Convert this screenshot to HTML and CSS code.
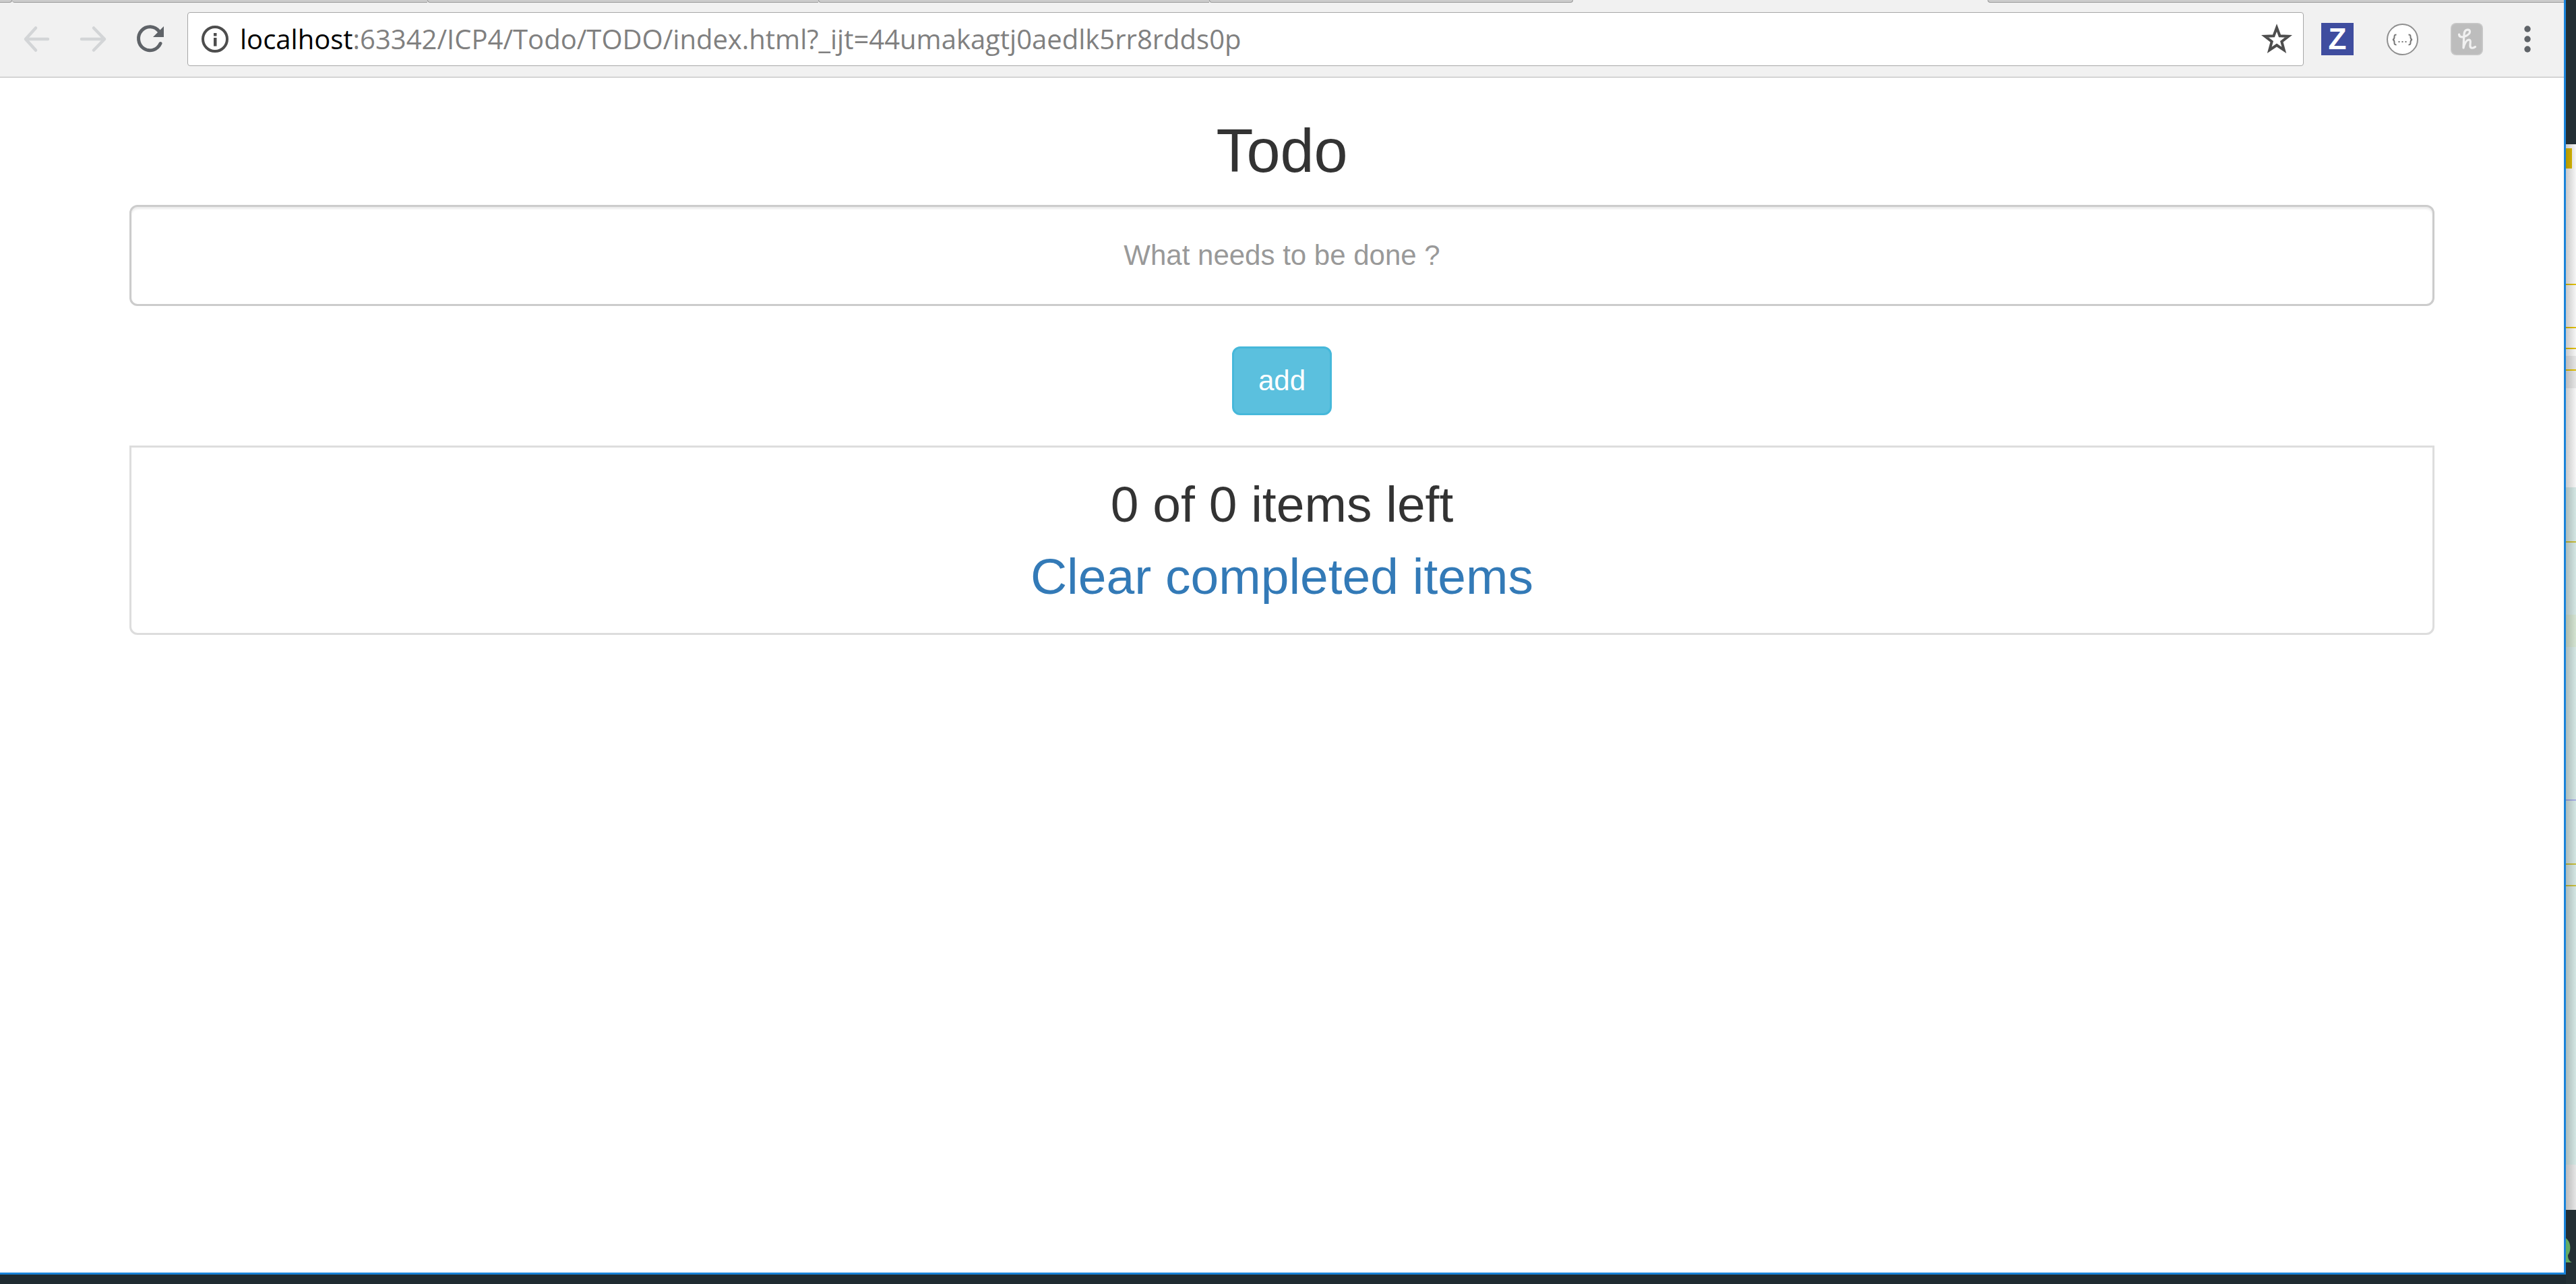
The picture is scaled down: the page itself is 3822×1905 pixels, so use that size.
FILE: index.html
```html
<!DOCTYPE html>
<html lang="en">
<head>
<meta charset="utf-8">
<title>Todo</title>
<link rel="stylesheet" href="styles.css">
</head>
<body>
<div class="desktop">
  <div class="window">
    <div class="tabs">
      <span class="tab tab-first"></span>
      <span class="tab tab-wide"></span>
      <span class="tab"></span>
      <span class="tab"></span>
      <span class="tab tab-last"></span>
      <span class="tab-active"></span>
      <span class="tab-rest"></span>
    </div>
    <header class="toolbar">
      <nav class="nav">
        <button class="icon-button" aria-label="Back" disabled>
          <svg class="icon" viewBox="0 0 40 40"><path d="M19 3.500 4 20 19 36.500M4 20H37" fill="none" stroke="#d3d5d7" stroke-width="4.500" stroke-linecap="round" stroke-linejoin="round"/></svg>
        </button>
        <button class="icon-button" aria-label="Forward" disabled>
          <svg class="icon" viewBox="0 0 40 40"><path d="M21 3.500 37 20 21 36.500M37 20H3" fill="none" stroke="#d3d5d7" stroke-width="4.500" stroke-linecap="round" stroke-linejoin="round"/></svg>
        </button>
        <button class="icon-button" aria-label="Reload">
          <svg class="icon" viewBox="0 0 40 40"><path d="M34 8.500A17 17.500 0 1 0 36 26.500" fill="none" stroke="#5f6368" stroke-width="5" stroke-linecap="round"/><path d="M41 1V17H25Z" fill="#5f6368"/></svg>
        </button>
      </nav>
      <div class="omnibox">
        <svg class="icon" viewBox="0 0 40 40" aria-hidden="true"><circle cx="20" cy="20" r="18" fill="none" stroke="#4d4d4d" stroke-width="4"/><path d="M18 11h4.500v4.500H18zM18 18h4.500v12.500H18z" fill="#4d4d4d"/></svg>
        <div class="url" role="textbox" aria-label="Address" contenteditable="true" spellcheck="false"><span class="host">localhost</span>:63342/ICP4/Todo/TODO/index.html?_ijt=44umakagtj0aedlk5rr8rdds0p</div>
        <button class="icon-button" aria-label="Bookmark this page">
          <svg class="star" viewBox="0 0 44 44"><path d="M22 5 26.500 17.200 39.500 17.700 29.300 25.700 32.800 38.300 22 31 11.200 38.300 14.700 25.700 4.500 17.700 17.500 17.200Z" fill="none" stroke="#4d4d4d" stroke-width="4"/></svg>
        </button>
      </div>
      <div class="extensions">
        <button class="ext ext-z">Z</button>
        <button class="ext" aria-label="JSON viewer">
          <svg class="ext-icon" viewBox="0 0 48 48"><circle cx="24.500" cy="24.500" r="22.500" fill="#fff" stroke="#8f8f8f" stroke-width="2"/><path d="M15.500 17.500c-3 0-3 1-3 3.500 0 2.500-.5 3.500-2.500 3.800 2 .3 2.500 1.500 2.500 4 0 2.500 0 3.700 3 3.700M33.500 17.500c3 0 3 1 3 3.500 0 2.500.5 3.500 2.500 3.800-2 .3-2.500 1.500-2.500 4 0 2.500 0 3.700-3 3.700" fill="none" stroke="#777" stroke-width="2"/><path d="M18.500 28h2M23.500 28h2M28.500 28h2" stroke="#777" stroke-width="2"/></svg>
        </button>
        <button class="ext" aria-label="Honey">
          <svg class="ext-icon" viewBox="0 0 48 48"><rect width="48" height="48" rx="8" fill="#c8c8c8"/><rect x="1.500" y="1.500" width="45" height="45" rx="7" fill="#bdbdbd"/><path d="M12.500 17C13 21.500 17 21.500 21 20 26 18 29 16 28.500 12.500 28 9 22 9 20.500 14 19.500 18 19.500 26 19 37 20.500 31 23 25.500 27 25 31 25 28.500 31 29 34.500 29.500 38.500 34 37.500 36.500 35.500" fill="none" stroke="#f1f1f1" stroke-width="3.200" stroke-linecap="round" stroke-linejoin="round"/></svg>
        </button>
        <button class="icon-button" aria-label="Menu">
          <svg class="dots" viewBox="0 0 36 40"><g fill="#5f6368"><circle cx="18" cy="5" r="4.700"/><circle cx="18" cy="20" r="4.700"/><circle cx="18" cy="35" r="4.700"/></g></svg>
        </button>
      </div>
    </header>
    <main class="page">
      <h1 class="title">Todo</h1>
      <form class="todo-form">
        <input class="todo-input" type="text" aria-label="New item" placeholder="What needs to be done ?">
        <button class="add-button" type="button">add</button>
      </form>
      <section class="summary">
        <h2 class="summary-line">0 of 0 items left</h2>
        <h2 class="summary-line"><a class="clear-link" href="#">Clear completed items</a></h2>
      </section>
    </main>
  </div>
  <svg class="backdrop" viewBox="0 0 15 1905" preserveAspectRatio="none" aria-hidden="true">
    <defs><linearGradient id="shade"><stop offset="0" stop-color="#000" stop-opacity=".2"/><stop offset="1" stop-color="#000" stop-opacity=".02"/></linearGradient></defs>
    <rect width="15" height="1905" fill="#232f34"/>
    <rect y="214" width="15" height="514" fill="#fbfbfb"/>
    <rect y="220" width="9" height="30" fill="#dfbd00"/>
    <rect y="528" width="15" height="48" fill="#eaeaea"/>
    <rect y="723" width="15" height="1005" fill="#d8ebe8"/>
    <rect y="912" width="15" height="48" fill="#d8e8d5"/>
    <path d="M0 422H15M0 486H15M0 517H15M0 549H15" stroke="#e5c300" stroke-width="2"/>
    <path d="M0 804H15M0 1282H15M0 1314H15" stroke="#cbc13c" stroke-width="2"/>
    <path d="M0 1187H15" stroke="#a9b1ea" stroke-width="2"/>
    <rect y="1728" width="15" height="67" fill="#eaeaea"/>
    <rect y="214" width="15" height="1581" fill="url(#shade)"/>
    <path d="M0 1837C8 1843 8 1856 3 1862 3 1868 5 1871 9 1873H0Z" fill="#62ab62"/>
  </svg>
</div>
</body>
</html>
```
FILE: styles.css
```css
* {
  box-sizing: border-box;
}

body {
  margin: 0;
  font-family: "Liberation Sans", Arial, sans-serif;
  color: #333;
}

button {
  padding: 0;
  border: 0;
  background: none;
}

svg {
  display: block;
  overflow: visible;
}

.desktop {
  display: flex;
  min-height: 100vh;
  background: #1f2b31;
}

.window {
  flex: 1;
  margin-bottom: 14px;
  border: solid #1a83d9;
  border-width: 0 3px 3px 0;
  background: #fff;
}

.backdrop {
  width: 15px;
  height: 100vh;
}

/* Lower edge of the tab strip */
.tabs {
  display: flex;
  height: 4px;
  background: #f1f1f1;
}

.tab,
.tab-rest {
  width: 580px;
  border: solid #999;
  border-width: 0 0 1px 1px;
  border-bottom-left-radius: 4px;
  background: #ccc;
}

.tab-first {
  width: 18px;
  border-width: 0 1px 1px 0;
  border-radius: 0 0 4px 0;
}

.tab-wide {
  width: 616px;
  border-left: 0;
}

.tab-last {
  width: 540px;
  border-right-width: 1px;
  border-bottom-right-radius: 4px;
}

.tab-active {
  width: 615px;
}

.tab-rest {
  flex: 1;
}

.toolbar {
  display: flex;
  align-items: center;
  padding: 14px 36px 16px 34px;
  border-bottom: 1px solid #b5b5b5;
  background: #f1f1f1;
}

.nav {
  display: flex;
  gap: 44px;
  margin-right: 36px;
}

.icon {
  width: 40px;
  height: 40px;
}

.omnibox {
  display: flex;
  flex: 1;
  align-items: center;
  height: 80px;
  padding: 0 17px 0 20px;
  border: 1px solid #a6a6a6;
  border-radius: 4px;
  background: #fff;
}

.url {
  flex: 1;
  margin-left: 17px;
  font-family: "Open Sans", "Noto Sans", sans-serif;
  font-size: 40px;
  line-height: 56px;
  white-space: nowrap;
  color: #808080;
}

.host {
  color: #000;
}

.star {
  width: 44px;
  height: 44px;
}

.extensions {
  display: flex;
  align-items: center;
  gap: 48px;
  margin-left: 26px;
}

.ext,
.ext-icon {
  width: 48px;
  height: 48px;
}

.ext-z {
  background: #3f4d9f;
  font: bold 44px/48px "Liberation Sans", Arial, sans-serif;
  color: #fff;
}

.dots {
  width: 36px;
  height: 40px;
}

.page {
  padding: 60px 192px;
  text-align: center;
}

.title {
  margin: 0 0 30px;
  font-size: 90px;
  font-weight: 400;
  line-height: 99px;
}

.todo-form {
  display: flex;
  flex-direction: column;
  align-items: center;
  gap: 60px;
}

.todo-input {
  width: 100%;
  height: 150px;
  padding: 24px 40px;
  border: 3px solid #ccc;
  border-radius: 12px;
  box-shadow: inset 0 3px 3px rgba(0, 0, 0, 0.08);
  font: 42px "Liberation Sans", Arial, sans-serif;
  text-align: center;
  color: #555;
}

.todo-input::placeholder {
  color: #999;
}

.add-button {
  width: 148px;
  height: 102px;
  border: 3px solid #46b8da;
  border-radius: 12px;
  background: #5bc0de;
  font: 42px "Liberation Sans", Arial, sans-serif;
  color: #fff;
}

.summary {
  display: flex;
  flex-direction: column;
  gap: 25px;
  margin-top: 45px;
  padding: 43px;
  border: 3px solid #ddd;
  border-radius: 0 0 12px 12px;
}

.summary-line {
  margin: 0;
  font-size: 75px;
  font-weight: 400;
  line-height: 82px;
}

.clear-link {
  color: #337ab7;
  text-decoration: none;
}
```
